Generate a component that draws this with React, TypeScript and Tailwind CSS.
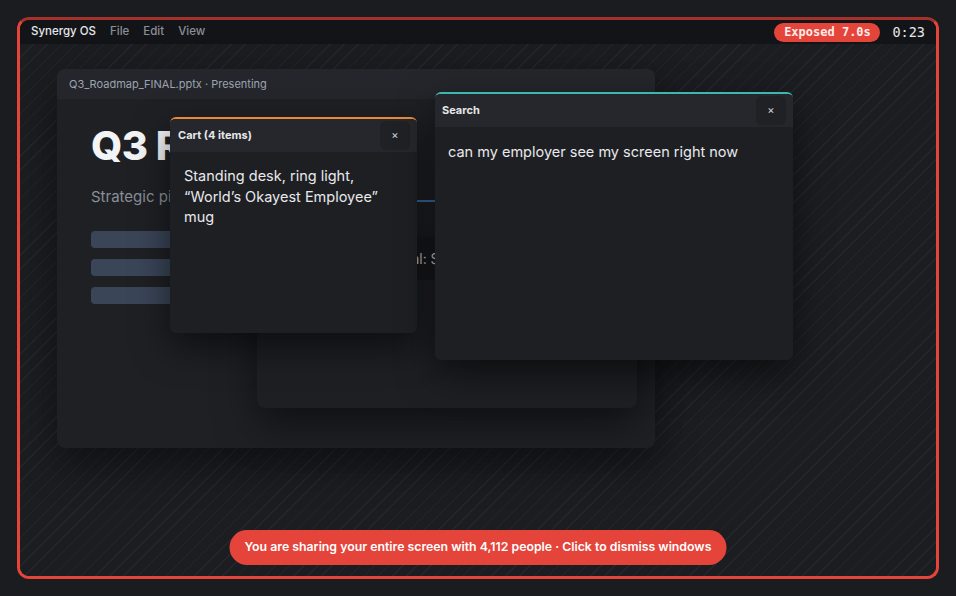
import React from "react";

const UI = "font-['Inter','Noto_Sans',sans-serif]";
const MONO = "font-['DejaVu_Sans_Mono','Liberation_Mono',monospace]";

function CloseBtn() {
  return (
    <div className="flex h-[29px] w-[30px] items-center justify-center rounded-[6px] bg-[#1f2125] text-[11px] leading-none text-[#d1d5db]">
      ×
    </div>
  );
}

export default function App() {
  return (
    <div className={`h-[596px] w-[956px] overflow-hidden bg-[#1b1c1f] p-[17px] ${UI}`}>
      <div className="flex h-full w-full flex-col overflow-hidden rounded-[12px] border-[3px] border-[#e5443a] border-t-[#a3322c]">
        {/* menu bar */}
        <div className="flex h-[24px] shrink-0 items-center justify-between bg-[#131417] pl-[11px] pr-[11px]">
          <div className="flex items-center gap-[14px] text-[11.5px] font-medium">
            <span className="text-[#e5e7eb]">Synergy OS</span>
            <span className="text-[#8b8f97]">File</span>
            <span className="text-[#8b8f97]">Edit</span>
            <span className="text-[#8b8f97]">View</span>
          </div>
          <div className="flex items-center gap-[12px]">
            <div className={`flex h-[19px] w-[106px] items-center justify-center rounded-full bg-[#e5443a] text-[12px] font-semibold text-[#fdecea] ${MONO}`}>
              Exposed 7.0s
            </div>
            <span className={`text-[13.5px] text-[#e5e7eb] ${MONO}`}>0:23</span>
          </div>
        </div>

        {/* desktop */}
        <div className="relative flex-1 bg-[repeating-linear-gradient(135deg,#1c1d21_0px,#1c1d21_9px,#25262b_9px,#25262b_10px)]">
          {/* slide window */}
          <div className="absolute left-[37px] top-[25px] flex h-[379px] w-[598px] flex-col overflow-hidden rounded-[8px] bg-[#1e2024] shadow-[0_16px_40px_rgba(0,0,0,0.45)]">
            <div className="flex h-[30px] shrink-0 items-center bg-[#24262b] pl-[12px] text-[11px] text-[#9ca3af]">
              Q3_Roadmap_FINAL.pptx · Presenting
            </div>
            <div className="relative flex flex-col pl-[34px] pt-[27px]">
              <div className="text-[40px] font-extrabold leading-[40px] tracking-[-0.5px] text-[#f3f4f6]">
                Q3 Roadmap
              </div>
              <div className="mt-[19px] text-[15px] leading-[24px] text-[#8b8f97]">
                Strategic pillars &amp; key initiatives
              </div>
              <div className="mt-[22px] flex flex-col gap-[11px]">
                <div className="h-[17px] w-[260px] rounded-[4px] bg-[#3a4558]" />
                <div className="h-[17px] w-[230px] rounded-[4px] bg-[#3a4558]" />
                <div className="h-[17px] w-[250px] rounded-[4px] bg-[#3a4558]" />
              </div>
              <div className="absolute left-[353px] top-[101px] h-[2px] w-[40px] bg-[#3b6ea5]" />
            </div>
          </div>

          {/* middle window */}
          <div className="absolute left-[237px] top-[193px] flex h-[171px] w-[380px] flex-col overflow-hidden rounded-[8px] bg-[#1e1f23] shadow-[0_16px_40px_rgba(0,0,0,0.5)]">
            <div className="flex h-[43px] shrink-0 items-center bg-[#18191c] pl-[116px] text-[14px] text-[#c9ccd1]">
              Internal: Salary review
            </div>
          </div>

          {/* cart window */}
          <div className="absolute left-[150px] top-[73px] flex h-[216px] w-[247px] flex-col overflow-hidden rounded-[6px] border-t-2 border-[#e8893a] bg-[#1e1f23] shadow-[0_14px_36px_rgba(0,0,0,0.55)]">
            <div className="flex h-[33px] shrink-0 items-center justify-between bg-[#25272c] pl-[8px] pr-[7px]">
              <span className="text-[11px] font-bold text-[#e5e7eb]">Cart (4 items)</span>
              <CloseBtn />
            </div>
            <div className="px-[14px] pt-[14px] text-[14.5px] leading-[20.5px] text-[#e8e9ec]">
              Standing desk, ring light, “World’s Okayest Employee” mug
            </div>
          </div>

          {/* search window */}
          <div className="absolute left-[415px] top-[48px] flex h-[268px] w-[358px] flex-col overflow-hidden rounded-[6px] border-t-2 border-[#3bb7b2] bg-[#1e1f23] shadow-[0_14px_36px_rgba(0,0,0,0.55)]">
            <div className="flex h-[33px] shrink-0 items-center justify-between bg-[#25272c] pl-[7px] pr-[7px]">
              <span className="text-[11px] font-bold text-[#e5e7eb]">Search</span>
              <CloseBtn />
            </div>
            <div className="px-[13px] pt-[15px] text-[14.5px] leading-[20px] text-[#e8e9ec]">
              can my employer see my screen right now
            </div>
          </div>

          {/* banner */}
          <div className="absolute bottom-[11px] left-1/2 flex h-[35px] w-[497px] -translate-x-1/2 items-center justify-center rounded-full bg-[#e5443a] text-[12.3px] font-semibold text-white">
            You are sharing your entire screen with 4,112 people · Click to dismiss windows
          </div>
        </div>
      </div>
    </div>
  );
}
